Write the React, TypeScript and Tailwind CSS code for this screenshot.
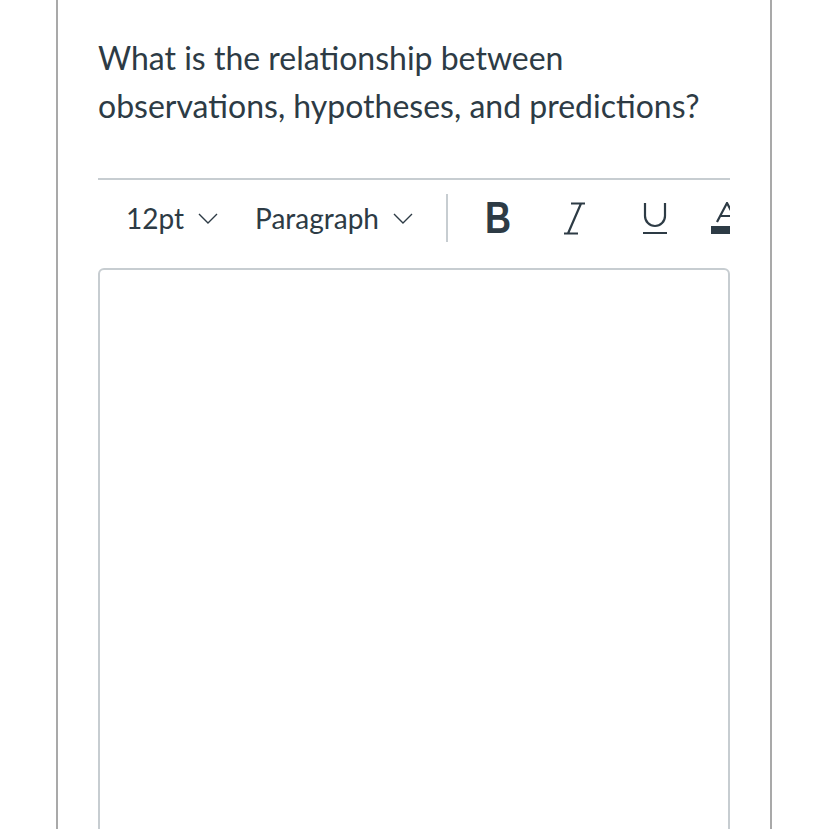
const font = { fontFamily: "Lato, 'Noto Sans', sans-serif" };

function Chevron() {
  return (
    <svg width="20" height="11" viewBox="0 0 20 11" fill="none" stroke="#2d3b45" strokeWidth="1.4">
      <path d="M1 1l9 9 9-9" />
    </svg>
  );
}

function ItalicIcon() {
  return (
    <svg width="24" height="33" viewBox="0 0 24 33" fill="none" stroke="#2d3b45" strokeWidth="2.2">
      <path d="M8 1.5h14M1 31.5h14M18 1.5L5 31.5" />
    </svg>
  );
}

function UnderlineIcon() {
  return (
    <svg width="26" height="33" viewBox="0 0 26 33" fill="none" stroke="#2d3b45" strokeWidth="2.2">
      <path d="M3 1v13a10 10 0 0 0 20 0V1M1 31h24" />
    </svg>
  );
}

function ColorIcon() {
  return (
    <svg width="30" height="33" viewBox="0 0 30 33" className="shrink-0">
      <path d="M6 20L16 1l10 19M9 14h14" fill="none" stroke="#2d3b45" strokeWidth="2.2" />
      <rect x="0" y="24" width="30" height="8" fill="#2d3b45" />
    </svg>
  );
}

export default function App() {
  return (
    <div className="h-[829px] w-full overflow-hidden bg-white text-[#2d3b45]" style={font}>
      <div className="ml-[56px] h-full w-[716px] border-x-2 border-[#a9a9a9] px-[40px]">
        <p className="pt-[34px] text-[32px] leading-[48px]">
          What is the relationship between observations, hypotheses, and predictions?
        </p>

        <div className="mt-[48px] border-t-2 border-[#c7cdd1]">
          <div className="flex h-[80px] items-center overflow-hidden whitespace-nowrap pb-[4px] pl-[28px] text-[28px] leading-none">
            <span>12pt</span>
            <span className="ml-[14px] flex"><Chevron /></span>
            <span className="ml-[37px]">Paragraph</span>
            <span className="ml-[14px] flex"><Chevron /></span>
            <span className="ml-[33px] h-[48px] w-[2px] shrink-0 bg-[#c7cdd1]" />
            <span
              className="ml-[37px] origin-left scale-x-[0.82] text-[44px] font-bold leading-none"
              style={{ fontFamily: "'Liberation Sans', Arial, sans-serif" }}
            >
              B
            </span>
            <span className="ml-[46px] flex"><ItalicIcon /></span>
            <span className="ml-[55px] flex"><UnderlineIcon /></span>
            <span className="ml-[43px] flex"><ColorIcon /></span>
          </div>
        </div>

        <div className="mt-[8px] h-[700px] rounded-md border-2 border-[#c7cdd1]" />
      </div>
    </div>
  );
}
